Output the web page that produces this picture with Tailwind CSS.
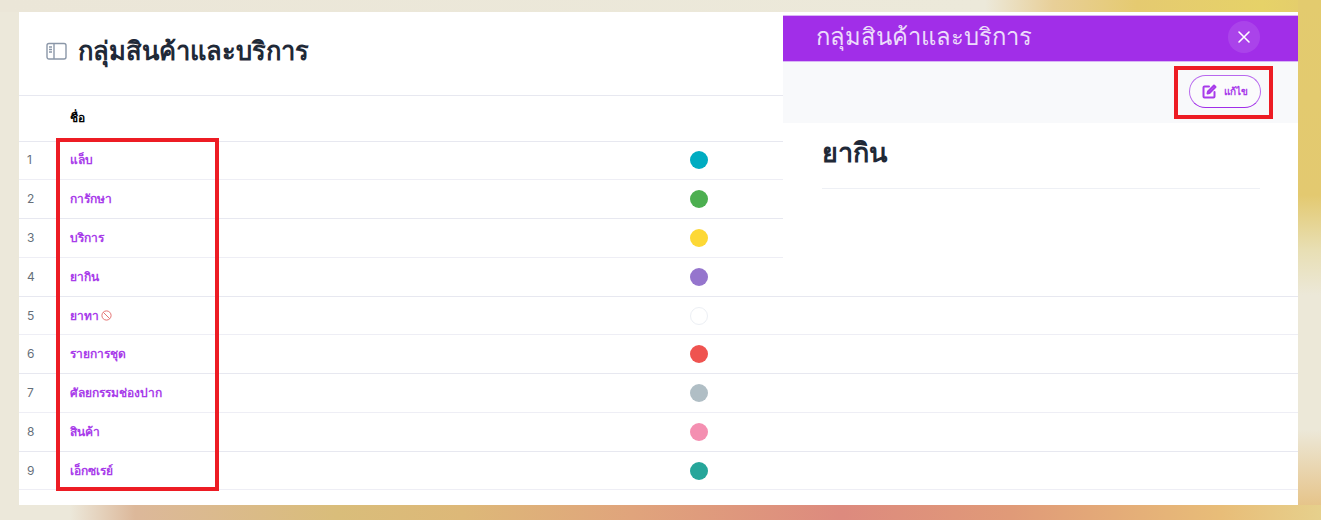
<!doctype html>
<html>

<head>
  <meta charset="UTF-8">
  <title>กลุ่มสินค้าและบริการ</title>
  <script src="https://cdn.jsdelivr.net/npm/@tailwindcss/browser@4"></script>
</head>

<body class="font-['Inter','Noto_Sans',sans-serif]">
  <div class="relative w-[1321px] h-[520px] overflow-hidden pt-[12px] pl-[19px] bg-[#ece8da]">

    <!-- Background strips around the card -->
    <div class="absolute top-0 inset-x-0 h-[12px] bg-[linear-gradient(90deg,#ebe6d8_0,#ece9da_985px,#e8cf98_1053px,#e5ca70_1137px,#e6d268_1263px,#e3cb6e_1321px)]"></div>
    <div class="absolute top-0 right-0 w-[23px] h-[520px] bg-[linear-gradient(180deg,#e3cb6e_0,#e3c970_195px,#e8dfb4_250px,#ece8d8_295px,#ece8d8_430px,#e6c48a_505px,#e6c48a_520px)]"></div>
    <div class="absolute bottom-0 inset-x-0 h-[15px] bg-[linear-gradient(90deg,#ece8da_0,#ece8da_70px,#dcb89a_135px,#d9bd7a_337px,#ddb878_463px,#e0a47c_632px,#dd8a7e_842px,#e09a78_1010px,#e8bd78_1221px,#e6d08c_1321px)]"></div>

    <!-- Main card -->
    <div class="relative w-[1279px] h-[493px] bg-white">
      <div class="h-[84px] flex items-center gap-[11px] pl-[27px] pb-[4px] border-b border-[#e7e8f0]">
        <svg class="w-[21px] h-[21px] text-[#8b97a8]" viewBox="0 0 21 21" fill="none" stroke="currentColor" stroke-width="1.4">
          <rect x="1" y="2.5" width="19" height="15.5" rx="2" />
          <path d="M8 2.5v15.5M3 6h3M3 8.5h3M3 11h3" />
        </svg>
        <h1 class="text-[25.5px] font-bold text-[#1f2937]">กลุ่มสินค้าและบริการ</h1>
      </div>

      <!-- Table -->
      <div class="h-[45.6px] flex items-center pl-[51px] border-b border-[#e7e8f0] text-[12px] font-bold text-black">ชื่อ</div>
      <div class="text-[12px] font-semibold">
        <div class="h-[38.78px] flex items-center border-b border-[#eeeef5]">
          <span class="w-[51px] pl-[8px] text-[#666f7a] font-normal">1</span>
          <a class="w-[620px] text-[#a83cea]">แล็บ</a>
          <span class="w-[18px] h-[18px] rounded-full bg-[#00acc1]"></span>
        </div>
        <div class="h-[38.78px] flex items-center border-b border-[#e7e8f0]">
          <span class="w-[51px] pl-[8px] text-[#666f7a] font-normal">2</span>
          <a class="w-[620px] text-[#a83cea]">การักษา</a>
          <span class="w-[18px] h-[18px] rounded-full bg-[#4caf50]"></span>
        </div>
        <div class="h-[38.78px] flex items-center border-b border-[#eeeef5]">
          <span class="w-[51px] pl-[8px] text-[#666f7a] font-normal">3</span>
          <a class="w-[620px] text-[#a83cea]">บริการ</a>
          <span class="w-[18px] h-[18px] rounded-full bg-[#fdd835]"></span>
        </div>
        <div class="h-[38.78px] flex items-center border-b border-[#e7e8f0]">
          <span class="w-[51px] pl-[8px] text-[#666f7a] font-normal">4</span>
          <a class="w-[620px] text-[#a83cea]">ยากิน</a>
          <span class="w-[18px] h-[18px] rounded-full bg-[#9575cd]"></span>
        </div>
        <div class="h-[38.78px] flex items-center border-b border-[#eeeef5]">
          <span class="w-[51px] pl-[8px] text-[#666f7a] font-normal">5</span>
          <a class="w-[620px] flex items-center gap-[2px] text-[#a83cea]">ยาทา
            <svg class="w-[11px] h-[11px] text-[#e57373]" viewBox="0 0 11 11" fill="none" stroke="currentColor" stroke-width="1">
              <circle cx="5.5" cy="5.5" r="4.6" />
              <path d="M2.3 2.3l6.4 6.4" />
            </svg>
          </a>
          <span class="w-[18px] h-[18px] rounded-full bg-white border border-[#eceff4]"></span>
        </div>
        <div class="h-[38.78px] flex items-center border-b border-[#e7e8f0]">
          <span class="w-[51px] pl-[8px] text-[#666f7a] font-normal">6</span>
          <a class="w-[620px] text-[#a83cea]">รายการชุด</a>
          <span class="w-[18px] h-[18px] rounded-full bg-[#ef5350]"></span>
        </div>
        <div class="h-[38.78px] flex items-center border-b border-[#eeeef5]">
          <span class="w-[51px] pl-[8px] text-[#666f7a] font-normal">7</span>
          <a class="w-[620px] text-[#a83cea]">ศัลยกรรมช่องปาก</a>
          <span class="w-[18px] h-[18px] rounded-full bg-[#b0bec5]"></span>
        </div>
        <div class="h-[38.78px] flex items-center border-b border-[#e7e8f0]">
          <span class="w-[51px] pl-[8px] text-[#666f7a] font-normal">8</span>
          <a class="w-[620px] text-[#a83cea]">สินค้า</a>
          <span class="w-[18px] h-[18px] rounded-full bg-[#f48fb1]"></span>
        </div>
        <div class="h-[38.78px] flex items-center border-b border-[#eeeef5]">
          <span class="w-[51px] pl-[8px] text-[#666f7a] font-normal">9</span>
          <a class="w-[620px] text-[#a83cea]">เอ็กซเรย์</a>
          <span class="w-[18px] h-[18px] rounded-full bg-[#26a69a]"></span>
        </div>
      </div>

      <!-- Side panel -->
      <div class="absolute left-[764px] top-[3px] w-[515px] h-[280px] bg-white">
        <div class="h-[47px] flex items-center justify-between pl-[33px] pr-[38px] pb-[3px] bg-[#a12ee8] border-y border-[#d9b5f5]">
          <span class="text-[23.8px] text-[#ecdcfb]">กลุ่มสินค้าและบริการ</span>
          <button class="w-[32px] h-[32px] flex items-center justify-center rounded-full bg-white/10 text-white">
            <svg class="w-[14px] h-[14px]" viewBox="0 0 14 14" fill="none" stroke="currentColor" stroke-width="1.6" stroke-linecap="round">
              <path d="M2 2l10 10M12 2L2 12" />
            </svg>
          </button>
        </div>
        <div class="h-[61px] flex items-center justify-end pr-[37px] pb-[3px] bg-[#f8f9fb]">
          <button class="w-[72px] h-[33px] flex items-center justify-center gap-[7px] rounded-full bg-white/40 border border-[#b868ee] border-b-[#a12ee8] text-[#a83cea] text-[10px] font-semibold">
            <svg class="w-[15px] h-[15px]" viewBox="0 0 15 15" fill="none" stroke="currentColor" stroke-width="2" stroke-linecap="round" stroke-linejoin="round">
              <path d="M7 2.5H2.5a1 1 0 0 0-1 1v9a1 1 0 0 0 1 1h9a1 1 0 0 0 1-1V8" />
              <path d="M12 1.5l1.5 1.5L7.5 9 5.5 9.5 6 7.5z" />
            </svg>
            แก้ไข
          </button>
        </div>
        <div class="ml-[39px] mr-[38px] pt-[10px] pb-[14px] border-b border-[#eef0f5]">
          <h2 class="text-[27px] font-bold text-[#1f2937]">ยากิน</h2>
        </div>
      </div>

      <!-- Highlight boxes -->
      <div class="absolute left-[37px] top-[126px] w-[163px] h-[353px] border-[4px] border-[#ed1c24]"></div>
      <div class="absolute left-[1155px] top-[54px] w-[99px] h-[53px] border-[4px] border-[#ed1c24]"></div>
    </div>
  </div>
</body>

</html>
